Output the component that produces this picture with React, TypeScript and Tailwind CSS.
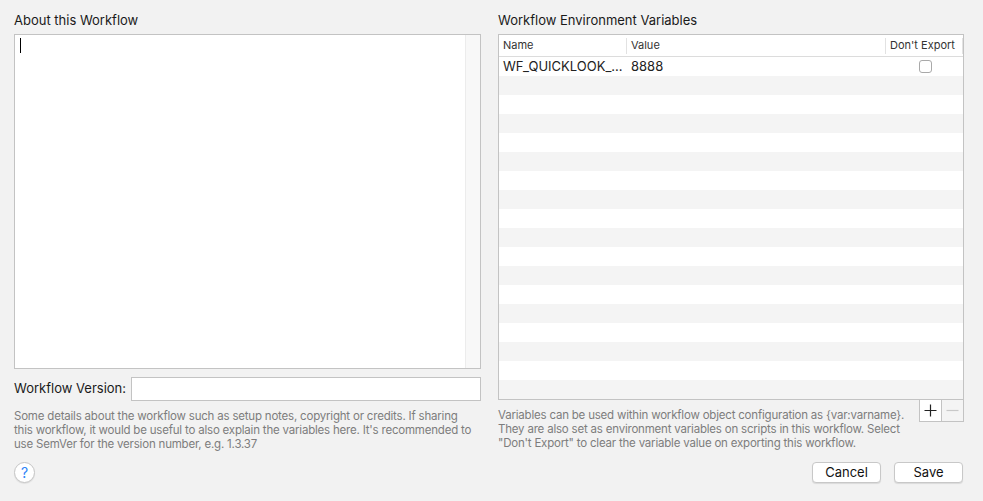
import React from 'react';

const rows = Array.from({ length: 18 }, (_, i) => i);

const App = () => {
    return (
        <div
            className="w-[983px] h-[501px] bg-[#f2f2f2] text-[#222] flex flex-col"
            style={{ fontFamily: 'Inter, "Liberation Sans", sans-serif' }}
        >
            <div className="flex pl-[14px] pt-[12px]">
                {/* left column */}
                <div className="w-[467px] flex flex-col">
                    <div className="text-[13px] leading-[16px] h-[16px] mb-[6px] text-[#1a1a1a]">About this Workflow</div>
                    <div className="h-[335px] border border-[#c3c3c3] bg-white flex">
                        <div className="flex-1 relative">
                            <div className="absolute left-[5px] top-[3px] w-px h-[15px] bg-black" />
                        </div>
                        <div className="w-[15px] bg-[#f8f8f8] border-l border-[#ececec]" />
                    </div>
                    <div className="flex items-center mt-[8px] h-[24px]">
                        <div className="text-[13px] w-[117px] text-[#1a1a1a]">Workflow Version:</div>
                        <div className="flex-1 h-[24px] bg-white border border-[#c3c3c3]" />
                    </div>
                    <p className="mt-[8px] text-[11.5px] leading-[14px] text-[#7d7d7d] whitespace-nowrap tracking-[-0.2px]">
                        <span className="block">Some details about the workflow such as setup notes, copyright or credits. If sharing</span>
                        <span className="block">this workflow, it would be useful to also explain the variables here. It's recommended to</span>
                        <span className="block">use SemVer for the version number, e.g. 1.3.37</span>
                    </p>
                </div>

                {/* right column */}
                <div className="w-[466px] ml-[17px] flex flex-col">
                    <div className="text-[13px] leading-[16px] h-[16px] mb-[6px] text-[#1a1a1a]">Workflow Environment Variables</div>
                    <div className="border border-[#c3c3c3] bg-white">
                        <div className="flex h-[22px] border-b border-[#dcdcdc] text-[11px] text-[#333] items-center">
                            <div className="w-[128px] pl-[4px] border-r border-[#e2e2e2] h-[16px] leading-[15px]">Name</div>
                            <div className="w-[259px] pl-[4px] border-r border-[#e2e2e2] h-[16px] leading-[15px]">Value</div>
                            <div className="flex-1 pl-[4px] h-[16px] leading-[15px] border-r border-[#e2e2e2]">Don't Export</div>
                        </div>
                        {rows.map((i) => (
                            <div
                                key={i}
                                className={`flex h-[19px] items-center text-[13px] ${i % 2 === 1 ? 'bg-[#f4f4f4]' : 'bg-white'}`}
                            >
                                {i === 0 && (
                                    <>
                                        <div className="w-[128px] pl-[4px] truncate">WF_QUICKLOOK_...</div>
                                        <div className="w-[259px] pl-[4px]">8888</div>
                                        <div className="flex-1 flex justify-center pl-[1px]">
                                            <div className="w-[13px] h-[13px] rounded-[3px] border border-[#a9a9a9] bg-white" />
                                        </div>
                                    </>
                                )}
                            </div>
                        ))}
                    </div>
                    <div className="flex">
                        <p className="flex-1 min-w-0 mt-[8px] text-[11.5px] leading-[14px] text-[#7d7d7d] whitespace-nowrap tracking-[-0.2px]">
                            <span className="block">Variables can be used within workflow object configuration as {'{var:varname}'}.</span>
                            <span className="block">They are also set as environment variables on scripts in this workflow. Select</span>
                            <span className="block">"Don't Export" to clear the variable value on exporting this workflow.</span>
                        </p>
                        <div className="flex h-[22px] border border-t-0 border-[#c3c3c3]">
                            <div className="w-[22px] flex items-center justify-center bg-white border-r border-[#c3c3c3]">
                                <svg width="13" height="13" viewBox="0 0 13 13">
                                    <path d="M6.5 0.5v12M0.5 6.5h12" stroke="#222" strokeWidth="1.2" />
                                </svg>
                            </div>
                            <div className="w-[21px] flex items-center justify-center bg-[#f4f4f4]">
                                <svg width="13" height="13" viewBox="0 0 13 13">
                                    <path d="M0.5 6.5h12" stroke="#c8c8c8" strokeWidth="1.2" />
                                </svg>
                            </div>
                        </div>
                    </div>
                </div>
            </div>

            {/* bottom bar */}
            <div className="flex items-center mt-auto mb-[18px] pl-[14px] pr-[20px]">
                <div className="w-[21px] h-[21px] rounded-full bg-white border border-[#c6c6c6] shadow-[0_1px_1px_rgba(0,0,0,0.08)] flex items-center justify-center text-[14px] text-[#2d83f7]">
                    ?
                </div>
                <div className="flex-1" />
                <button className="w-[69px] h-[21px] rounded-[4px] bg-white border border-[#c8c8c8] shadow-[0_1px_1px_rgba(0,0,0,0.1)] text-[13px] leading-[19px] text-[#111]">
                    Cancel
                </button>
                <button className="w-[69px] h-[21px] ml-[13px] rounded-[4px] bg-white border border-[#c8c8c8] shadow-[0_1px_1px_rgba(0,0,0,0.1)] text-[13px] leading-[19px] text-[#111]">
                    Save
                </button>
            </div>
        </div>
    );
};

export default App;
